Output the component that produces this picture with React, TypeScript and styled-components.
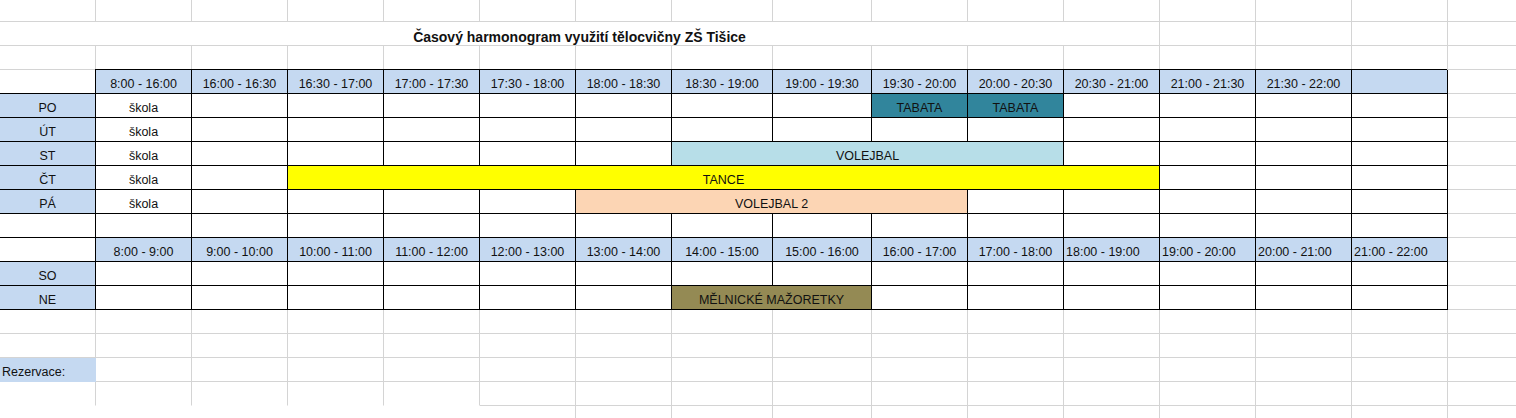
import React from 'react';
import styled, { createGlobalStyle } from 'styled-components';

// column widths A..P, in px (incl. the 1px right line)
const COLS = [96, 96, 96, 96, 96, 96, 96, 101, 99, 96, 96, 96, 96, 96, 96, 96];

type Tone = 'white' | 'head' | 'teal' | 'sky' | 'yellow' | 'peach' | 'olive';

const FILL: Record<Tone, string> = {
  white: '#ffffff',
  head: '#c5d9f1',
  teal: '#31859c',
  sky: '#b7dee8',
  yellow: '#ffff00',
  peach: '#fcd5b4',
  olive: '#948a54',
};

type CellDef = {
  text?: string;
  span?: number;
  tone?: Tone;
  boxed?: boolean;
  left?: boolean;
  bold?: boolean;
  open?: boolean;
  blank?: boolean;
  covered?: boolean;
};

const grid = (n: number, extra: CellDef = {}): CellDef[] =>
  Array.from({ length: n }, () => ({ ...extra }));
const box = (n: number, tone: Tone = 'white'): CellDef[] =>
  Array.from({ length: n }, () => ({ boxed: true, tone }));
const heads = (texts: string[], leftFrom = 99): CellDef[] =>
  texts.map((text, i) => ({ text, boxed: true, tone: 'head' as Tone, left: i >= leftFrom }));
const day = (label: string, rest: CellDef[]): CellDef[] => [
  { text: label, boxed: true, tone: 'head' },
  ...rest,
  {},
];

const WEEK_SLOTS = [
  '8:00 - 16:00', '16:00 - 16:30', '16:30 - 17:00', '17:00 - 17:30', '17:30 - 18:00',
  '18:00 - 18:30', '18:30 - 19:00', '19:00 - 19:30', '19:30 - 20:00', '20:00 - 20:30',
  '20:30 - 21:00', '21:00 - 21:30', '21:30 - 22:00', '',
];

const WEEKEND_SLOTS = [
  '8:00 - 9:00', '9:00 - 10:00', '10:00 - 11:00', '11:00 - 12:00', '12:00 - 13:00',
  '13:00 - 14:00', '14:00 - 15:00', '15:00 - 16:00', '16:00 - 17:00', '17:00 - 18:00',
  '18:00 - 19:00', '19:00 - 20:00', '20:00 - 21:00', '21:00 - 22:00',
];

const school: CellDef = { text: 'škola', boxed: true, tone: 'white' };

const ROWS: CellDef[][] = [
  grid(16),
  [{ text: 'Časový harmonogram využití tělocvičny ZŠ Tišice', span: 12, bold: true }, ...grid(4)],
  grid(16),
  [{}, ...heads(WEEK_SLOTS), {}],
  day('PO', [
    school,
    ...box(7),
    { text: 'TABATA', boxed: true, tone: 'teal' },
    { text: 'TABATA', boxed: true, tone: 'teal' },
    ...box(4),
  ]),
  day('ÚT', [school, ...box(13)]),
  day('ST', [school, ...box(5), { text: 'VOLEJBAL', span: 4, boxed: true, tone: 'sky' }, ...box(4)]),
  day('ČT', [school, ...box(1), { text: 'TANCE', span: 9, boxed: true, tone: 'yellow' }, ...box(3)]),
  day('PÁ', [school, ...box(4), { text: 'VOLEJBAL 2', span: 4, boxed: true, tone: 'peach' }, ...box(5)]),
  [...box(15), {}],
  [...box(1), ...heads(WEEKEND_SLOTS, 10), {}],
  day('SO', box(14)),
  day('NE', [...box(6), { text: 'MĚLNICKÉ MAŽORETKY', span: 2, boxed: true, tone: 'olive' }, ...box(6)]),
  grid(16),
  grid(16),
  [{ text: 'Rezervace:', tone: 'head', left: true, covered: true }, ...grid(15)],
  [...grid(5, { open: true }), ...grid(11)],
  [{ blank: true, span: 5 }, ...grid(11)],
];

const GlobalStyle = createGlobalStyle`
  html, body {
    margin: 0;
    padding: 0;
    background: #ffffff;
    overflow: hidden;
  }
  body {
    font-family: "Liberation Sans", Arial, sans-serif;
    color: #111111;
  }
`;

const Viewport = styled.div`
  width: 100vw;
  height: 100vh;
  overflow: hidden;
`;

const Sheet = styled.div`
  display: grid;
  grid-template-columns: ${COLS.map((w) => `${w}px`).join(' ')};
  grid-template-rows: 22px repeat(17, 24px);
  width: max-content;
`;

const Cell = styled.div<{
  $span: number;
  $fill: string;
  $line: string;
  $open: boolean;
  $boxed: boolean;
  $left: boolean;
  $bold: boolean;
}>`
  grid-column: span ${(p) => p.$span};
  display: flex;
  align-items: flex-end;
  justify-content: ${(p) => (p.$left ? 'flex-start' : 'center')};
  min-width: 0;
  padding: 0 2px ${(p) => (p.$bold ? 1 : 2)}px;
  background: ${(p) => p.$fill};
  border-right: 1px solid ${(p) => p.$line};
  border-bottom: 1px solid ${(p) => (p.$open ? p.$fill : p.$line)};
  box-shadow: ${(p) => (p.$boxed ? '-1px -1px 0 #000000' : 'none')};
  font-size: ${(p) => (p.$bold ? 14 : 12.5)}px;
  font-weight: ${(p) => (p.$bold ? 700 : 400)};
  line-height: 14px;
  white-space: nowrap;
  overflow: hidden;
`;

const lineFor = (c: CellDef) => {
  if (c.blank) return '#ffffff';
  if (c.boxed) return '#000000';
  if (c.covered) return FILL[c.tone ?? 'white'];
  return '#d4d4d4';
};

export default function App() {
  return (
    <Viewport>
      <GlobalStyle />
      <Sheet>
        {ROWS.map((row, r) =>
          row.map((c, i) => (
            <Cell
              key={`${r}-${i}`}
              $span={c.span ?? 1}
              $fill={FILL[c.tone ?? 'white']}
              $line={lineFor(c)}
              $open={!!c.open}
              $boxed={!!c.boxed}
              $left={!!c.left}
              $bold={!!c.bold}
            >
              {c.text}
            </Cell>
          )),
        )}
      </Sheet>
    </Viewport>
  );
}
